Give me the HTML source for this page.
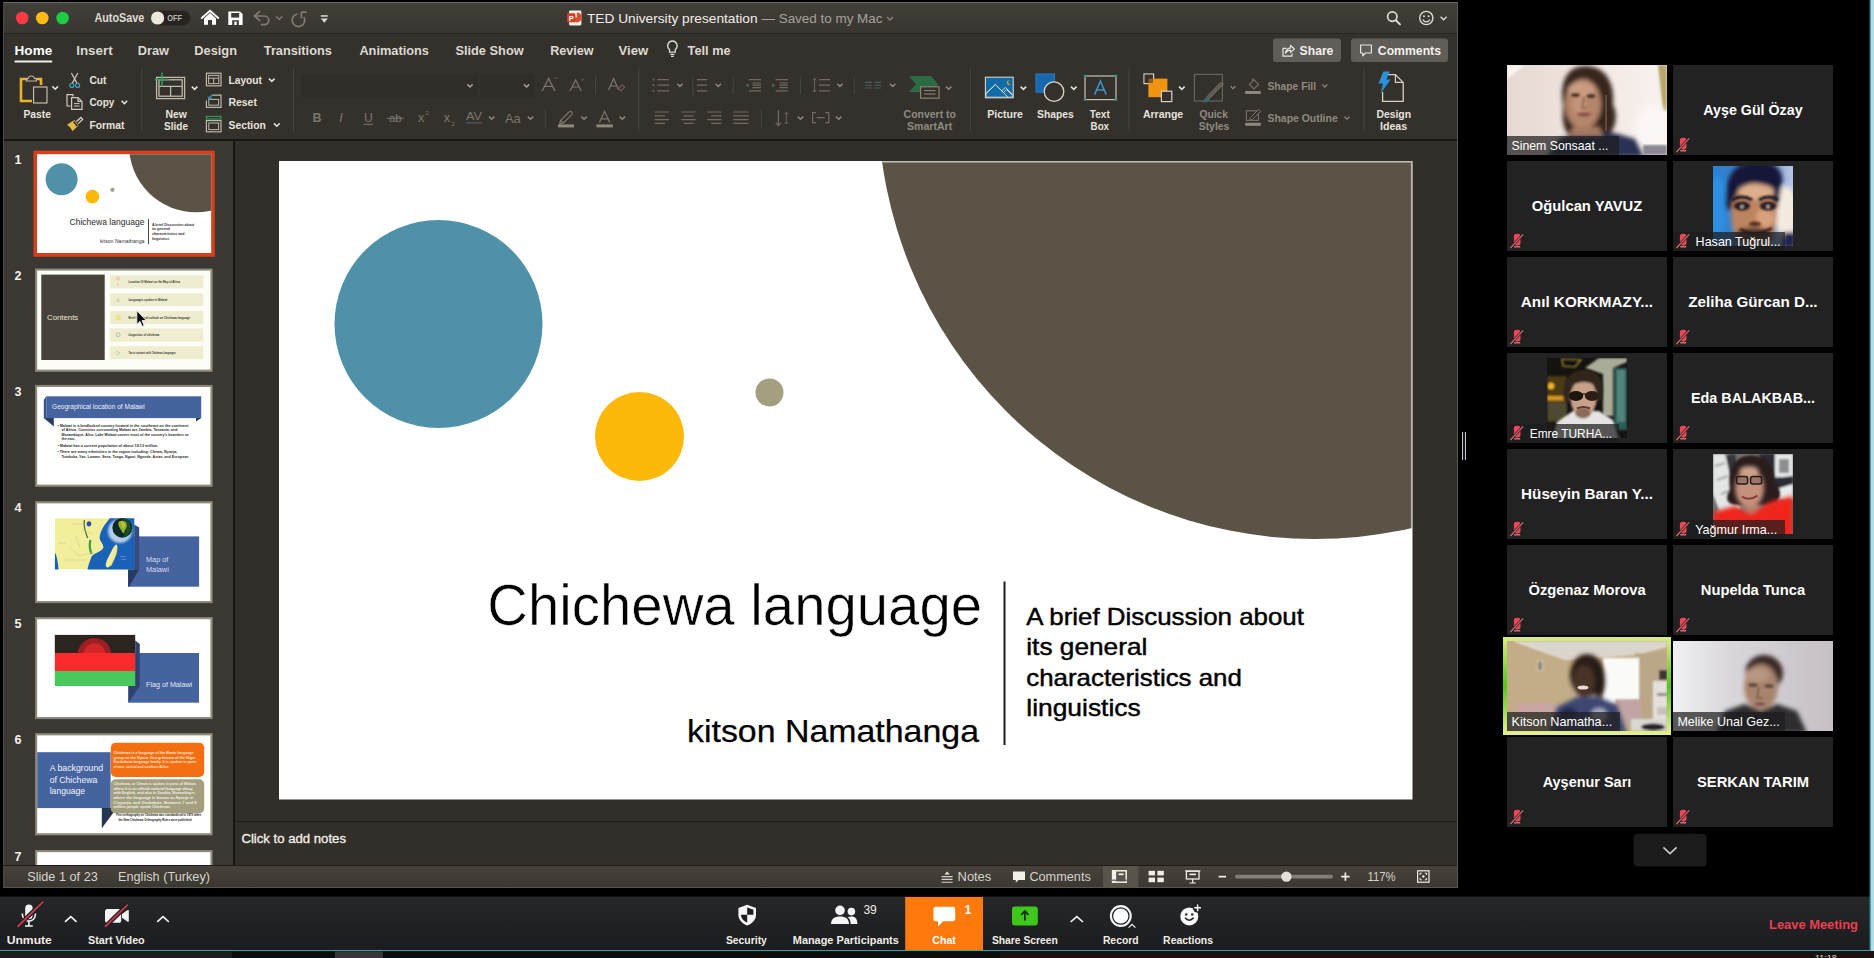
<!DOCTYPE html>
<html lang="en">
<head>
<meta charset="utf-8">
<title>Zoom Meeting - TED University presentation</title>
<style>
html,body{margin:0;padding:0;background:#000;overflow:hidden;}
body{width:1874px;height:958px;position:relative;font-family:"Liberation Sans",sans-serif;}
svg{position:absolute;left:0;top:0;display:block;}
text{font-family:"Liberation Sans",sans-serif;}
.ui{fill:#e9e6df;font-size:12px;}
.uib{fill:#f1eee8;font-size:12px;font-weight:bold;}
.dim{fill:#8d897f;}
.zb{fill:#ffffff;font-size:12.5px;font-weight:bold;}
.pn{fill:#ffffff;font-size:15px;font-weight:bold;}
.ps{fill:#ffffff;font-size:13px;}
</style>
</head>
<body>
<svg width="1874" height="958" viewBox="0 0 1874 958">
<defs>
  <linearGradient id="gTitle" x1="0" y1="0" x2="0" y2="1">
    <stop offset="0" stop-color="#423f3a"/><stop offset="1" stop-color="#393631"/>
  </linearGradient>
  <linearGradient id="gZoom" x1="0" y1="0" x2="0" y2="1"><stop offset="0" stop-color="#262729"/><stop offset="1" stop-color="#1b1c20"/></linearGradient>
  <linearGradient id="gStatus" x1="0" y1="0" x2="0" y2="1">
    <stop offset="0" stop-color="#47433c"/><stop offset="1" stop-color="#3a3731"/>
  </linearGradient>
  <clipPath id="circClip"><circle cx="1315" cy="102" r="437"/></clipPath>
  <clipPath id="slideClip"><rect x="279" y="161" width="1133.5" height="638.5"/></clipPath>
  <filter id="b2"><feGaussianBlur stdDeviation="2"/></filter>
  <filter id="b3"><feGaussianBlur stdDeviation="3.5"/></filter>
  <filter id="b1"><feGaussianBlur stdDeviation="1"/></filter>
  <filter id="b05"><feGaussianBlur stdDeviation="0.5"/></filter>
</defs>

<!-- ============ full background ============ -->
<rect x="0" y="0" width="1874" height="958" fill="#000000"/>

<!-- ============ POWERPOINT WINDOW ============ -->
<g id="ppt">
  <!-- title bar -->
  <rect x="3" y="2" width="1455" height="32" fill="url(#gTitle)"/>
  <rect x="3" y="2" width="1455" height="1" fill="#6b6761"/>
  <!-- tabs + ribbon -->
  <rect x="3" y="34" width="1455" height="105" fill="#34312c"/>
  <rect x="3" y="33" width="1455" height="1" fill="#2a2723"/>
  <rect x="3" y="139" width="1455" height="2" fill="#1a1713"/>
  <!-- thumbnail panel -->
  <rect x="3" y="141" width="230" height="724" fill="#3b3733"/>
  <rect x="233" y="141" width="2" height="724" fill="#191612"/>
  <!-- main editing area -->
  <rect x="235" y="141" width="1223" height="681" fill="#322f2a"/>
  <!-- notes -->
  <rect x="235" y="821" width="1223" height="1" fill="#1f1c18"/>
  <rect x="235" y="822" width="1223" height="43" fill="#322f2a"/>
  <!-- status bar -->
  <rect x="3" y="865" width="1455" height="1" fill="#1f1c18"/>
  <rect x="3" y="866" width="1455" height="22" fill="url(#gStatus)"/>
  <rect x="1457" y="2" width="1" height="886" fill="#5a584e"/>
  <rect x="3" y="887" width="1455" height="1" fill="#5a564d"/>
  <rect x="3" y="2" width="1" height="886" fill="#4c4943"/>
</g>

<!-- ============ MAIN SLIDE ============ -->
<g id="slide">
  <rect x="279" y="161" width="1133.5" height="638.5" fill="#ffffff"/>
  <g clip-path="url(#slideClip)">
    <circle cx="1315" cy="102" r="437" fill="#5b5346"/>
  </g>
  <circle cx="438.5" cy="324" r="104" fill="#4f91a9"/>
  <circle cx="639.5" cy="436.5" r="44.5" fill="#fdb909"/>
  <circle cx="769.5" cy="392.5" r="14" fill="#a39f7f"/>
  <rect x="279.8" y="161.8" width="1131.9" height="636.9" fill="none" stroke="#bdb9ae" stroke-width="1.6" clip-path="url(#circClip)"/>
  <rect x="1003.5" y="581.5" width="2" height="163.5" fill="#1a1a1a"/>
  <text x="487.3" y="624.5" font-size="58" fill="#000" stroke="#ffffff" stroke-width="0.55" textLength="494.8" lengthAdjust="spacingAndGlyphs">Chichewa language</text>
  <text x="687" y="741.7" font-size="30.5" fill="#000" stroke="#000" stroke-width="0.25" textLength="292" lengthAdjust="spacingAndGlyphs">kitson Namathanga</text>
  <g font-size="24" fill="#000" stroke="#000" stroke-width="0.45">
    <text x="1026.3" y="625" textLength="277.6" lengthAdjust="spacingAndGlyphs">A brief Discussion about</text>
    <text x="1026.3" y="655.3" textLength="121" lengthAdjust="spacingAndGlyphs">its general</text>
    <text x="1026.3" y="685.7" textLength="215.5" lengthAdjust="spacingAndGlyphs">characteristics and</text>
    <text x="1026.3" y="716.3" textLength="114.4" lengthAdjust="spacingAndGlyphs">linguistics</text>
  </g>
</g>

<!-- ============ ZOOM TOOLBAR ============ -->
<g id="zoombar-bg">
  <rect x="0" y="896.6" width="1874" height="53.8" fill="url(#gZoom)"/>
  <rect x="0" y="950" width="1874" height="1.3" fill="#3ba3a8"/>
  <rect x="0" y="951.3" width="1874" height="6.7" fill="#0b0c0b"/>
  <rect x="0" y="951.3" width="232" height="6.7" fill="#1d1f1e"/>
  <rect x="335" y="951.3" width="48" height="6.7" fill="#363737"/>
  <rect x="1000" y="951.3" width="874" height="6.7" fill="#1a1210"/>
</g>

<!-- ============ TITLE BAR ============ -->
<g id="titlebar">
  <circle cx="22.2" cy="18" r="6.3" fill="#fc3a45"/>
  <circle cx="42.3" cy="18" r="6.3" fill="#fdbb13"/>
  <circle cx="62.6" cy="18" r="6.3" fill="#1ecb43"/>
  <text x="94.4" y="22.3" font-size="12.3" font-weight="bold" fill="#dedbd3" textLength="50" lengthAdjust="spacingAndGlyphs">AutoSave</text>
  <rect x="151" y="10.8" width="39.5" height="14.4" rx="7.2" fill="#262320"/>
  <circle cx="157.6" cy="18" r="6.6" fill="#ebe7da"/>
  <text x="167.2" y="21.3" font-size="8.8" font-weight="bold" fill="#b9b5ab" textLength="15" lengthAdjust="spacingAndGlyphs">OFF</text>
  <!-- home -->
  <path d="M204 18.4 L210 13 L216 18.4 V24.8 H212 V20 H208 V24.8 H204 Z" fill="#ffffff"/>
  <path d="M201.8 18 L210 10.7 L218.2 18" fill="none" stroke="#ffffff" stroke-width="1.9" stroke-linejoin="miter" stroke-linecap="round"/>
  <!-- save -->
  <path d="M228.3 11.4 H240 L242.6 14 V25 H228.3 Z" fill="#ffffff"/>
  <rect x="231.2" y="13" width="8" height="4.6" fill="#3d3a35"/>
  <rect x="232.2" y="20.2" width="6.6" height="4.8" fill="#3d3a35"/>
  <rect x="234.3" y="21.6" width="2.4" height="3.4" fill="#ffffff"/>
  <!-- undo (dim) -->
  <g fill="none" stroke="#7f7b73" stroke-width="1.7" stroke-linecap="round" stroke-linejoin="round">
    <path d="M259.5 11.6 L254.6 16 L259.5 20.4"/>
    <path d="M255 16 H264.5 A4.3 4.3 0 0 1 264.5 24.6 H261.5"/>
    <path d="M276.4 16.8 L279.2 19.6 L282 16.8" stroke-width="1.4"/>
    <!-- redo -->
    <path d="M304.2 17.6 A6.3 6.3 0 1 1 296.6 14.2"/>
    <path d="M301.4 17.8 V12.2 H306"/>
  </g>
  <!-- customize -->
  <rect x="320.8" y="15.2" width="7" height="1.5" fill="#dedbd3"/>
  <path d="M320.8 18.4 H327.8 L324.3 22.8 Z" fill="#dedbd3"/>
  <!-- ppt doc icon -->
  <rect x="569" y="10.4" width="12.4" height="15" rx="1.4" fill="#f3efe9"/>
  <path d="M576.8 12.4 A5 5 0 1 1 571.8 17.4 H576.8 Z" fill="#d9502e"/>
  <rect x="567" y="13.2" width="8.4" height="9" rx="0.8" fill="#d2401f"/>
  <text x="568.7" y="20.6" font-size="7.6" font-weight="bold" fill="#ffffff">P</text>
  <text x="587" y="22.6" font-size="13" fill="#f1eee8" textLength="170.5" lengthAdjust="spacingAndGlyphs">TED University presentation</text>
  <text x="761.5" y="22.6" font-size="13" fill="#a5a199" textLength="121" lengthAdjust="spacingAndGlyphs">— Saved to my Mac</text>
  <path d="M887 17 L890 20 L893 17" fill="none" stroke="#8a867d" stroke-width="1.3"/>
  <!-- search -->
  <circle cx="1392.3" cy="16.6" r="4.7" fill="none" stroke="#dedbd3" stroke-width="1.7"/>
  <path d="M1395.8 20.2 L1400 24.4" stroke="#dedbd3" stroke-width="2" stroke-linecap="round"/>
  <!-- smiley -->
  <circle cx="1426.3" cy="18" r="6.6" fill="none" stroke="#dedbd3" stroke-width="1.4"/>
  <circle cx="1424" cy="16.2" r="1" fill="#dedbd3"/><circle cx="1428.6" cy="16.2" r="1" fill="#dedbd3"/>
  <path d="M1422.8 19.6 A3.8 3.8 0 0 0 1429.8 19.6" fill="none" stroke="#dedbd3" stroke-width="1.3"/>
  <path d="M1440.6 16.8 L1443.6 19.8 L1446.6 16.8" fill="none" stroke="#dedbd3" stroke-width="1.5"/>
</g>

<!-- ============ TABS ============ -->
<g id="tabs" font-size="13.5" font-weight="bold" fill="#dcd9d1">
  <text x="14.6" y="54.6" fill="#ffffff" textLength="37.6" lengthAdjust="spacingAndGlyphs">Home</text>
  <rect x="14.4" y="60.4" width="38" height="2.2" rx="1" fill="#f2efe9"/>
  <text x="76.2" y="54.6" textLength="36.4" lengthAdjust="spacingAndGlyphs">Insert</text>
  <text x="137.8" y="54.6" textLength="31.2" lengthAdjust="spacingAndGlyphs">Draw</text>
  <text x="194.3" y="54.6" textLength="42.7" lengthAdjust="spacingAndGlyphs">Design</text>
  <text x="263.8" y="54.6" textLength="68" lengthAdjust="spacingAndGlyphs">Transitions</text>
  <text x="359.4" y="54.6" textLength="69.5" lengthAdjust="spacingAndGlyphs">Animations</text>
  <text x="455.4" y="54.6" textLength="68.3" lengthAdjust="spacingAndGlyphs">Slide Show</text>
  <text x="550.2" y="54.6" textLength="43.4" lengthAdjust="spacingAndGlyphs">Review</text>
  <text x="618.5" y="54.6" textLength="29.6" lengthAdjust="spacingAndGlyphs">View</text>
  <!-- bulb -->
  <path d="M672.4 41 A4.7 4.7 0 0 1 675.3 49.4 V52.2 H669.5 V49.4 A4.7 4.7 0 0 1 672.4 41 Z" fill="none" stroke="#dcd9d1" stroke-width="1.3"/>
  <path d="M670.3 54.4 H674.5 M671 56.4 H673.8" stroke="#dcd9d1" stroke-width="1.1"/>
  <text x="687.6" y="54.6" textLength="43" lengthAdjust="spacingAndGlyphs">Tell me</text>
  <!-- share / comments buttons -->
  <rect x="1273" y="38.6" width="68" height="23.4" rx="3" fill="#615e59"/>
  <rect x="1351" y="38.6" width="97" height="23.4" rx="3" fill="#615e59"/>
  <g fill="none" stroke="#e8e5de" stroke-width="1.2" stroke-linejoin="round">
    <path d="M1286.5 48.4 H1283 V56.2 H1292 V53.6"/>
    <path d="M1285.4 53.2 C1286 49.6 1288 48 1290.6 47.8 V45.4 L1294.4 49 L1290.6 52.4 V50.2 C1288.6 50.2 1286.8 51 1285.4 53.2 Z"/>
    <path d="M1360.6 45 H1371.4 V53 H1365.6 L1362.8 55.8 V53 H1360.6 Z"/>
  </g>
  <text x="1299.6" y="54.6" font-size="13" fill="#f4f1ec" textLength="33.8" lengthAdjust="spacingAndGlyphs">Share</text>
  <text x="1377.8" y="54.6" font-size="13" fill="#f4f1ec" textLength="63.2" lengthAdjust="spacingAndGlyphs">Comments</text>
</g>
<!-- ============ RIBBON: clipboard + slides ============ -->
<g id="ribbon-left" font-size="10.5" font-weight="bold" fill="#e6e3dc">
  <!-- paste icon -->
  <path d="M27.5 79 H21 V101 H32" fill="none" stroke="#e9b22c" stroke-width="2.6" stroke-linejoin="miter"/>
  <path d="M36.5 79 H41 V85" fill="none" stroke="#e9b22c" stroke-width="2.6"/>
  <path d="M26.4 81 V78.6 H28 A3.4 3.4 0 0 1 34.6 78.6 H36.4 V81 Z" fill="none" stroke="#bdb6a6" stroke-width="1.1"/>
  <rect x="33.6" y="87" width="13.4" height="16" fill="#34312c" stroke="#cfc6b2" stroke-width="1.1"/>
  <path d="M52.4 86.4 L55.2 89.2 L58 86.4" fill="none" stroke="#e6e3dc" stroke-width="1.5"/>
  <text x="23.4" y="118.2" textLength="27.6" lengthAdjust="spacingAndGlyphs">Paste</text>
  <!-- cut -->
  <g fill="none" stroke="#cfcbc0" stroke-width="1.2">
    <path d="M71.4 73 L77 83.4 M77.8 73 L72.2 83.4"/>
    <circle cx="71.8" cy="85.4" r="2" stroke="#3f9fc0"/><circle cx="77.6" cy="85.4" r="2" stroke="#3f9fc0"/>
  </g>
  <text x="89.4" y="83.9" textLength="17" lengthAdjust="spacingAndGlyphs">Cut</text>
  <!-- copy -->
  <g fill="none" stroke="#cfcbc0" stroke-width="1.2">
    <path d="M73 96.6 V94.6 H67 V106 H70.6"/>
    <path d="M71.6 97.6 H78 L82 101.4 V109.4 H71.6 Z"/>
    <path d="M78 97.8 V101.4 H81.8"/>
    <path d="M74 103.6 H79.6 M74 106 H79.6" stroke-width="1"/>
  </g>
  <text x="89.4" y="106.4" textLength="25" lengthAdjust="spacingAndGlyphs">Copy</text>
  <path d="M121.6 100.8 L124.4 103.6 L127.2 100.8" fill="none" stroke="#e6e3dc" stroke-width="1.5"/>
  <!-- format painter -->
  <path d="M67 124.8 L74.4 120 L78.6 125.6 L72.6 131 C71 128.6 69.4 126.4 67 124.8 Z" fill="#e3bb3f"/>
  <path d="M73.6 121.6 L77.4 126.2" stroke="#3a2c38" stroke-width="1.6"/>
  <path d="M76.4 121.6 L81 117.4 L82.6 119.4 L78.2 123.6" fill="none" stroke="#d8d4c8" stroke-width="1.3"/>
  <text x="89.4" y="128.7" textLength="35" lengthAdjust="spacingAndGlyphs">Format</text>
  <!-- separator -->
  <rect x="141.2" y="68.5" width="1" height="62.5" fill="#4a4741"/>
  <!-- new slide -->
  <g fill="none" stroke="#bdb9ab" stroke-width="1.3">
    <rect x="156.6" y="77.4" width="28" height="21.2"/>
    <rect x="159" y="79.8" width="23.2" height="16.4"/>
    <path d="M159 86.4 H182.2 M170.6 86.4 V96.2"/>
  </g>
  <path d="M162 72.4 V86.4 M154.8 79.4 H169" stroke="#2fa160" stroke-width="1.5"/>
  <path d="M191.8 86.6 L194.6 89.4 L197.4 86.6" fill="none" stroke="#e6e3dc" stroke-width="1.5"/>
  <text x="165.4" y="118.2" textLength="21.4" lengthAdjust="spacingAndGlyphs">New</text>
  <text x="164" y="130.4" textLength="24" lengthAdjust="spacingAndGlyphs">Slide</text>
  <!-- layout -->
  <g fill="none" stroke="#bdb9ab" stroke-width="1.2">
    <rect x="206.4" y="73.2" width="14.6" height="12.6"/>
    <rect x="208.6" y="75.4" width="10.2" height="8.2" stroke-width="1"/>
    <path d="M208.6 78.2 H218.8 M213.7 78.2 V83.6" stroke-width="1"/>
  </g>
  <text x="228.5" y="83.9" textLength="33.5" lengthAdjust="spacingAndGlyphs">Layout</text>
  <path d="M269 78.6 L271.8 81.4 L274.6 78.6" fill="none" stroke="#e6e3dc" stroke-width="1.5"/>
  <!-- reset -->
  <g fill="none" stroke="#bdb9ab" stroke-width="1.2">
    <path d="M212 95.2 H221 V107.4 H206.4 V100.6"/>
    <rect x="208.8" y="99.4" width="9.8" height="5.8" stroke-width="1"/>
  </g>
  <path d="M209.4 99 A4 4 0 0 1 213 95.4 M208 96.6 L209.2 99.4 L211.8 98.2" fill="none" stroke="#3f9fc0" stroke-width="1.1"/>
  <text x="228.5" y="106.4" textLength="28.4" lengthAdjust="spacingAndGlyphs">Reset</text>
  <!-- section -->
  <rect x="206.4" y="116.4" width="14.6" height="2.6" fill="none" stroke="#2fa160" stroke-width="1.1"/>
  <g fill="none" stroke="#bdb9ab" stroke-width="1.2">
    <rect x="206.4" y="120.6" width="14.6" height="11.2"/>
    <rect x="208.8" y="123" width="9.8" height="6.6" stroke-width="1"/>
  </g>
  <text x="228.5" y="128.7" textLength="37.4" lengthAdjust="spacingAndGlyphs">Section</text>
  <path d="M274 123.4 L276.8 126.2 L279.6 123.4" fill="none" stroke="#e6e3dc" stroke-width="1.5"/>
  <rect x="293" y="68.5" width="1" height="62.5" fill="#4a4741"/>
</g>
<!-- ============ RIBBON: font + paragraph (disabled look) ============ -->
<g id="ribbon-mid" fill="none" stroke="#7b776d" stroke-width="1.2" font-weight="normal">
  <!-- font name / size boxes -->
  <rect x="301.5" y="74.4" width="176" height="23" rx="3" fill="#302d28" stroke="none"/>
  <rect x="480.5" y="74.4" width="54" height="23" rx="3" fill="#302d28" stroke="none"/>
  <path d="M467.4 84.4 L470 87 L472.6 84.4 M524 84.4 L526.6 87 L529.2 84.4" stroke="#a5a197" stroke-width="1.5"/>
  <!-- grow / shrink font -->
  <path d="M542.2 91 L548.6 78.4 L555 91 M544.8 86.4 H552.4" stroke-width="1.3"/>
  <path d="M555 78.6 L556.4 77.2 L557.8 78.6" stroke-width="0.8"/>
  <path d="M570 91 L575.6 80 L581.2 91 M572.2 87 H579" stroke-width="1.2"/>
  <path d="M581.4 79 L582.8 80.4 L584.2 79" stroke-width="0.8"/>
  <path d="M595.6 75.6 V94.6" stroke="#4a4741" stroke-width="1"/>
  <!-- clear formatting -->
  <path d="M608.6 90 L613.6 78.6 L618.6 90 M610.6 86 H616.6" stroke-width="1.2"/>
  <path d="M618.6 88.4 L622.2 84.8 L624.6 87.2 L621 90.8 Z" stroke="#7a5560" stroke-width="1.1"/>
  <path d="M638.6 68.5 V131" stroke="#4a4741" stroke-width="1"/>
  <!-- row 2 : B I U ab x2 x2 AV Aa -->
  <g stroke="none" fill="#7b776d" font-size="13">
    <text x="312.4" y="122.4" font-weight="bold" font-size="12.4">B</text>
    <text x="339.2" y="122.4" font-style="italic" font-size="12.6">I</text>
    <text x="364" y="122" font-size="12.2">U</text>
    <rect x="363.6" y="123.8" width="9.4" height="1" />
    <text x="389" y="122" font-size="11.4">ab</text>
    <rect x="386.6" y="117.8" width="17" height="1"/>
    <text x="418" y="122.4" font-size="12.6">x</text>
    <text x="425.6" y="115" font-size="6">2</text>
    <text x="443.8" y="122.4" font-size="12.6">x</text>
    <text x="451.4" y="125.6" font-size="6">2</text>
    <text x="466" y="120" font-size="11.4" textLength="16" lengthAdjust="spacingAndGlyphs">AV</text>
    <rect x="466" y="122.4" width="16" height="1" fill="#4d6a70"/>
    <text x="505" y="122.6" font-size="12.2" textLength="15.6" lengthAdjust="spacingAndGlyphs">Aa</text>
  </g>
  <path d="M489 116.6 L491.7 119.3 L494.4 116.6 M527.8 116.6 L530.5 119.3 L533.2 116.6" stroke="#8b877d" stroke-width="1.5"/>
  <path d="M545.2 109.6 V127.6" stroke="#4a4741" stroke-width="1"/>
  <!-- highlight pen -->
  <path d="M560.6 120.4 L569 112 A1.6 1.6 0 0 1 571.8 114.6 L563.4 123 Z M560.6 120.4 L559.6 124 L563.4 123"/>
  <rect x="558" y="124.4" width="16" height="3" fill="#8d897d" stroke="none"/>
  <path d="M581.4 116.6 L584.1 119.3 L586.8 116.6" stroke="#8b877d" stroke-width="1.5"/>
  <!-- font colour -->
  <path d="M599.4 122.6 L604.6 111.4 L609.8 122.6 M601.4 118.8 H607.8"/>
  <rect x="596.4" y="124.4" width="16.4" height="3" fill="#8d897d" stroke="none"/>
  <path d="M619.6 116.6 L622.3 119.3 L625 116.6" stroke="#8b877d" stroke-width="1.5"/>

  <!-- paragraph row 1 -->
  <g stroke="#6f6b62" stroke-width="1.2">
    <path d="M657.4 79.6 H669 M657.4 85.2 H669 M657.4 90.8 H669"/>
    <path d="M697 79.6 H707.2 M697 85.2 H707.2 M697 90.8 H707.2"/>
    <path d="M749 79.6 H761 M752.4 85.2 H761 M749 90.8 H761 M752.4 83 H761 M752.4 87.6 H761" />
    <path d="M775.6 79.6 H787.8 M779.6 85.2 H787.8 M775.6 90.8 H787.8 M779.6 83 H787.8 M779.6 87.6 H787.8"/>
    <path d="M819 79.6 H830 M819 85.2 H830 M819 90.8 H830"/>
    <path d="M814.6 78.4 V92 M813 80.4 L814.6 78.4 L816.2 80.4 M813 90 L814.6 92 L816.2 90" stroke-width="0.9"/>
  </g>
  <g fill="#4e6a62" stroke="none">
    <circle cx="653.4" cy="79.6" r="1.1"/><circle cx="653.4" cy="85.2" r="1.1"/><circle cx="653.4" cy="90.8" r="1.1"/>
    <path d="M745.6 85.2 L748.6 83.2 V87.2 Z M772.2 83.2 L775.2 85.2 L772.2 87.2 Z"/>
  </g>
  <path d="M865 82.4 H872 M865 85.2 H872 M865 88 H872 M874.4 82.4 H881 M874.4 85.2 H881 M874.4 88 H881" stroke="#4a5f5a" stroke-width="1.1"/>
  <path d="M677.2 83.8 L679.9 86.5 L682.6 83.8 M715.6 83.8 L718.3 86.5 L721 83.8 M837.2 83.8 L839.9 86.5 L842.6 83.8 M890 83.8 L892.7 86.5 L895.4 83.8 M946 86.6 L948.7 89.3 L951.4 86.6" stroke="#8b877d" stroke-width="1.5"/>
  <path d="M692.8 77 V95 M733.2 77 V94 M800.4 77 V94 M854.2 77 V94" stroke="#4a4741" stroke-width="1"/>
  <!-- smartart -->
  <path d="M910 76.8 H931 L937.6 84.4 L931 91.6 H910 L916.6 84.4 Z" fill="#2b6b43" stroke="#2f7449" stroke-width="1"/>
  <rect x="920.6" y="86.8" width="18.4" height="11.4" fill="#34312c" stroke="#8f8a72" stroke-width="1.1"/>
  <path d="M924 90.6 H935.6 M924 94 H935.6" stroke="#8f8a72" stroke-width="1"/>
  <g stroke="none" fill="#8f8b81" font-weight="bold" font-size="10.5">
    <text x="903.6" y="118.2" textLength="52.4" lengthAdjust="spacingAndGlyphs">Convert to</text>
    <text x="907" y="130.4" textLength="45.2" lengthAdjust="spacingAndGlyphs">SmartArt</text>
  </g>
  <path d="M970.4 68.5 V131" stroke="#4a4741" stroke-width="1"/>
  <!-- paragraph row 2 -->
  <g stroke="#6f6b62" stroke-width="1.2">
    <path d="M654.6 112 H669 M654.6 115.8 H665 M654.6 119.6 H669 M654.6 123.4 H665"/>
    <path d="M681.4 112 H695.8 M683.6 115.8 H693.6 M681.4 119.6 H695.8 M683.6 123.4 H693.6"/>
    <path d="M707.2 112 H721.6 M711.2 115.8 H721.6 M707.2 119.6 H721.6 M711.2 123.4 H721.6"/>
    <path d="M733.4 112 H748.6 M733.4 115.8 H748.6 M733.4 119.6 H748.6 M733.4 123.4 H748.6"/>
    <path d="M778.4 110 V125.6 M775.8 123 L778.4 125.6 L781 123"/>
    <path d="M786.4 112.4 V124 M784.8 114.2 L786.4 112.4 L788 114.2 M784.8 122.2 L786.4 124 L788 122.2" stroke-width="0.9"/>
    <path d="M816 112.6 H812.6 V122.6 H816 M825.4 112.6 H828.8 V122.6 H825.4 M816.6 117.6 H824.8"/>
  </g>
  <path d="M761.4 109.6 V127.6" stroke="#4a4741" stroke-width="1"/>
  <path d="M797.8 116.6 L800.5 119.3 L803.2 116.6 M836 116.6 L838.7 119.3 L841.4 116.6" stroke="#8b877d" stroke-width="1.5"/>
</g>
<!-- ============ RIBBON: insert / drawing / designer ============ -->
<g id="ribbon-right" font-size="10.5" font-weight="bold" fill="#e6e3dc">
  <!-- picture -->
  <rect x="985.4" y="77.2" width="27.8" height="20.6" fill="#0f6cab" stroke="#d8d4c4" stroke-width="1.1"/>
  <path d="M986 93.4 L995.4 84.4 L1003.6 92.6 L1006.6 89.6 L1012.6 95.4 V97.2 H986 Z" fill="#0f6cab" stroke="#d8d4c4" stroke-width="1"/>
  <path d="M986 93.6 L995.4 84.6 L1008 97.2 M1001.6 91 L1005.4 87.4 L1012.6 94.6" fill="none" stroke="#d8d4c4" stroke-width="1"/>
  <path d="M1009.6 80 A2.6 2.6 0 1 0 1011.4 84.4 A2.2 2.2 0 0 1 1009.6 80 Z" fill="#f0a830"/>
  <path d="M1020.6 86.6 L1023.4 89.4 L1026.2 86.6" fill="none" stroke="#e6e3dc" stroke-width="1.5"/>
  <text x="987.2" y="118.2" textLength="35.8" lengthAdjust="spacingAndGlyphs">Picture</text>
  <!-- shapes -->
  <rect x="1036" y="74" width="18.6" height="18.2" fill="#1668b0" stroke="#2a7dc4" stroke-width="1"/>
  <circle cx="1054" cy="91.6" r="9.8" fill="#34312c" stroke="#d8d4c4" stroke-width="1.3"/>
  <path d="M1071 86.6 L1073.8 89.4 L1076.6 86.6" fill="none" stroke="#e6e3dc" stroke-width="1.5"/>
  <text x="1037" y="118.2" textLength="36.8" lengthAdjust="spacingAndGlyphs">Shapes</text>
  <!-- text box -->
  <rect x="1085" y="76" width="31" height="23.6" fill="none" stroke="#c8c4b4" stroke-width="1.2"/>
  <g fill="#2e8ba4"><rect x="1083.8" y="74.8" width="2.4" height="2.4"/><rect x="1114.8" y="74.8" width="2.4" height="2.4"/><rect x="1083.8" y="98.4" width="2.4" height="2.4"/><rect x="1114.8" y="98.4" width="2.4" height="2.4"/></g>
  <path d="M1094.6 94.6 L1100.4 81 L1106.2 94.6 M1096.8 90 H1104" fill="none" stroke="#3e95c8" stroke-width="1.5"/>
  <text x="1089.8" y="118.2" textLength="20" lengthAdjust="spacingAndGlyphs">Text</text>
  <text x="1090.6" y="130.4" textLength="18.4" lengthAdjust="spacingAndGlyphs">Box</text>
  <rect x="1128.4" y="68.5" width="1" height="62.5" fill="#4a4741"/>
  <!-- arrange -->
  <rect x="1144" y="74" width="9.6" height="9.6" fill="#34312c" stroke="#d8d4c4" stroke-width="1.2"/>
  <rect x="1148.4" y="78.6" width="19" height="18.6" fill="#f0930f"/>
  <rect x="1144.6" y="74.6" width="8.4" height="8.4" fill="#34312c" opacity="0.55"/>
  <rect x="1161.4" y="91.2" width="10.4" height="10.4" fill="#34312c" stroke="#d8d4c4" stroke-width="1.2"/>
  <path d="M1179 86.6 L1181.8 89.4 L1184.6 86.6" fill="none" stroke="#e6e3dc" stroke-width="1.5"/>
  <text x="1142.9" y="118.2" textLength="40.3" lengthAdjust="spacingAndGlyphs">Arrange</text>
  <!-- quick styles (dim) -->
  <rect x="1194.4" y="74.4" width="28" height="26.6" fill="none" stroke="#66635a" stroke-width="1.2"/>
  <path d="M1223.6 84 L1209.6 98.4 L1207 96.6 L1220.6 82.4 Z" fill="#5d5a52" stroke="#77736a" stroke-width="0.8"/>
  <path d="M1208.6 97.4 C1206 97 1203.6 99 1202.6 102.4 C1206 103 1209.6 101.6 1210 98.8 Z" fill="#3d6473"/>
  <path d="M1230.6 86.2 L1233 88.6 L1235.4 86.2" fill="none" stroke="#8b877d" stroke-width="1.3"/>
  <g fill="#8f8b81">
    <text x="1199.5" y="118.2" textLength="28.5" lengthAdjust="spacingAndGlyphs">Quick</text>
    <text x="1198.7" y="130.4" textLength="30.7" lengthAdjust="spacingAndGlyphs">Styles</text>
    <text x="1267.5" y="90.2" textLength="48.5" lengthAdjust="spacingAndGlyphs">Shape Fill</text>
    <text x="1267.5" y="122.4" textLength="70.2" lengthAdjust="spacingAndGlyphs">Shape Outline</text>
  </g>
  <!-- shape fill icon -->
  <path d="M1249.4 84.4 L1254 79.8 L1258.6 84.4 L1254 89 Z M1252.6 81.2 V78.4" fill="none" stroke="#77736a" stroke-width="1.1"/>
  <rect x="1245.2" y="91" width="15.6" height="3" fill="#8d897d"/>
  <path d="M1322.2 84.4 L1324.8 87 L1327.4 84.4" fill="none" stroke="#8b877d" stroke-width="1.3"/>
  <!-- shape outline icon -->
  <rect x="1246.4" y="110.8" width="12" height="9.6" fill="none" stroke="#77736a" stroke-width="1.1"/>
  <path d="M1250.4 117.6 L1258.6 109.4 L1260.6 111.4 L1252.4 119.6 L1249.8 120.2 Z" fill="#34312c" stroke="#77736a" stroke-width="1"/>
  <rect x="1245.2" y="122.8" width="15.6" height="3" fill="#8d897d"/>
  <path d="M1344.4 116.6 L1347 119.2 L1349.6 116.6" fill="none" stroke="#8b877d" stroke-width="1.3"/>
  <rect x="1363.4" y="68.5" width="1" height="62.5" fill="#4a4741"/>
  <!-- design ideas -->
  <path d="M1382.6 74.6 H1395.4 L1403.2 82.4 V101.4 H1382.6 V92" fill="none" stroke="#d8d4c4" stroke-width="1.3"/>
  <path d="M1395.4 74.8 V82.4 H1403" fill="none" stroke="#d8d4c4" stroke-width="1.2"/>
  <path d="M1383.4 71.6 H1389.8 L1386.4 79.4 H1390.6 L1380.6 93.4 L1383 83.6 H1378.4 Z" fill="#2a93d8"/>
  <text x="1376.4" y="118.2" textLength="34.6" lengthAdjust="spacingAndGlyphs">Design</text>
  <text x="1380" y="130.4" textLength="27.2" lengthAdjust="spacingAndGlyphs">Ideas</text>
</g>
<!-- ============ THUMBNAIL PANEL ============ -->
<g id="thumbs">
  <g font-size="12.6" font-weight="bold" fill="#f4f1ea">
    <text x="14.6" y="163.8">1</text><text x="14.6" y="279.8">2</text><text x="14.6" y="395.6">3</text>
    <text x="14.6" y="511.6">4</text><text x="14.6" y="628">5</text><text x="14.6" y="744">6</text><text x="14.6" y="860.6">7</text>
  </g>
  <!-- thumb 1 (selected) -->
  <rect x="33.4" y="150.6" width="181.4" height="106.2" fill="#d53f19"/>
  <rect x="37" y="154.2" width="174.2" height="98.8" fill="#ffffff"/>
  <clipPath id="t1c"><rect x="37" y="154.2" width="174.2" height="98.8"/></clipPath>
  <g clip-path="url(#t1c)"><circle cx="196.1" cy="145.2" r="67.1" fill="#5b5346"/></g>
  <circle cx="61.6" cy="179.3" r="16" fill="#4f91a9"/>
  <circle cx="92.4" cy="196.6" r="6.8" fill="#fdb909"/>
  <circle cx="112.4" cy="189.8" r="2.1" fill="#a39f7f"/>
  <rect x="148.1" y="218.9" width="0.9" height="25.2" fill="#333"/>
  <text x="69.5" y="225.4" font-size="8.9" fill="#2a2a2a" textLength="74.9" lengthAdjust="spacingAndGlyphs">Chichewa language</text>
  <text x="100" y="243.4" font-size="4.7" fill="#333" textLength="44.4" lengthAdjust="spacingAndGlyphs">kitson Namathanga</text>
  <g font-size="3.6" fill="#333" font-weight="bold">
    <text x="151.9" y="225.5" textLength="42.4" lengthAdjust="spacingAndGlyphs">A brief Discussion about</text>
    <text x="151.9" y="230.2" textLength="18.1" lengthAdjust="spacingAndGlyphs">its general</text>
    <text x="151.9" y="234.8" textLength="32.6" lengthAdjust="spacingAndGlyphs">characteristics and</text>
    <text x="151.9" y="239.5" textLength="17.2" lengthAdjust="spacingAndGlyphs">linguistics</text>
  </g>

  <!-- thumb 2 -->
  <rect x="35.4" y="268.9" width="176.8" height="102.6" fill="#8f8b7e" stroke="#8f8b7e" stroke-width="0.6"/>
  <rect x="37.2" y="270.6" width="173.2" height="99" fill="#fdfdf8"/>
  <rect x="41.3" y="274.6" width="63.4" height="85.4" fill="#46413a"/>
  <text x="47" y="320" font-size="8" fill="#ebe7c4" textLength="31.2" lengthAdjust="spacingAndGlyphs">Contents</text>
  <g fill="#eeedcf">
    <rect x="110.2" y="275.3" width="93.2" height="13"/><rect x="110.2" y="293.3" width="93.2" height="12.8"/>
    <rect x="110.2" y="311.1" width="93.2" height="13"/><rect x="110.2" y="328.4" width="93.2" height="13.3"/>
    <rect x="110.2" y="346.2" width="93.2" height="13"/>
  </g>
  <g fill="none" stroke-width="0.7">
    <path d="M118 280 A1.6 1.6 0 1 1 118.1 280 M118 283.2 V285.6" stroke="#e7a08a"/>
    <path d="M116.6 301.4 L118 298 L119.6 301.4 Z" stroke="#c9c8a4"/>
    <rect x="116.2" y="315.2" width="4" height="4.4" fill="#eee87a" stroke="#e8e27a"/>
    <circle cx="118.2" cy="334.8" r="1.9" stroke="#7fb3b0"/>
    <path d="M116.4 351 L119.8 353 L116.4 355" stroke="#a6c49a"/>
  </g>
  <g font-size="2.9" fill="#3a3a33" font-weight="bold">
    <text x="128.4" y="283" textLength="51.6" lengthAdjust="spacingAndGlyphs">Location Of Malawi on the Map of Africa</text>
    <text x="128.4" y="300.6" textLength="39" lengthAdjust="spacingAndGlyphs">Languages spoken in Malawi</text>
    <text x="128.4" y="318.8" textLength="61.6" lengthAdjust="spacingAndGlyphs">Brief historical outlook on Chichewa language</text>
    <text x="128.4" y="336" textLength="31" lengthAdjust="spacingAndGlyphs">Linguistics of chichewa</text>
    <text x="128.4" y="353.6" textLength="47.4" lengthAdjust="spacingAndGlyphs">Tea to contrast with Chichewa Languages</text>
  </g>

  <!-- thumb 3 -->
  <rect x="35.4" y="385.2" width="176.8" height="101.2" fill="#8f8b7e" stroke="#8f8b7e" stroke-width="0.6"/>
  <rect x="37.2" y="387" width="173.2" height="97.6" fill="#ffffff"/>
  <path d="M43.8 418 H53.8 V426.4 Z" fill="#2a3c63"/>
  <path d="M196 418 H201.2 L196 421.4 Z" fill="#2a3c63"/>
  <rect x="46.3" y="396.3" width="154.9" height="21.8" fill="#44639f"/>
  <path d="M43.8 400 L46.3 396.3 V418 H43.8 Z" fill="#3a568c"/>
  <text x="52.1" y="408.8" font-size="6.5" fill="#eef1f8" textLength="92.7" lengthAdjust="spacingAndGlyphs">Geographical location of Malawi</text>
  <g font-size="3" fill="#2c2c2c" font-weight="bold">
    <text x="57.4" y="426.6" textLength="131" lengthAdjust="spacingAndGlyphs">• Malawi is a landlocked country located in the southeast on the continent</text>
    <text x="61.4" y="431.2" textLength="116" lengthAdjust="spacingAndGlyphs">of Africa. Countries surrounding Malawi are Zambia, Tanzania, and</text>
    <text x="61.4" y="435.8" textLength="127" lengthAdjust="spacingAndGlyphs">Mozambique. Also, Lake Malawi covers most of the country's boarders to</text>
    <text x="61.4" y="440.4" textLength="14" lengthAdjust="spacingAndGlyphs">the east.</text>
    <text x="57.4" y="446.6" textLength="101" lengthAdjust="spacingAndGlyphs">• Malawi has a current population of about 19.13 million.</text>
    <text x="57.4" y="453.4" textLength="120" lengthAdjust="spacingAndGlyphs">• There are many ethnicities in the region including: Chewa, Nyanja,</text>
    <text x="61.4" y="457.8" textLength="127" lengthAdjust="spacingAndGlyphs">Tumbuka, Yao, Lomwe, Sena, Tonga, Ngoni, Ngonde, Asian, and European</text>
  </g>

  <!-- thumb 4 -->
  <rect x="35.4" y="501.6" width="176.8" height="101.2" fill="#8f8b7e" stroke="#8f8b7e" stroke-width="0.6"/>
  <rect x="37.2" y="503.4" width="173.2" height="97.6" fill="#ffffff"/>
  <rect x="128.1" y="536.4" width="71" height="50.3" fill="#44639f"/>
  <path d="M128.1 569.5 H139.2 L129 586.7 H128.1 Z" fill="#2b3a62"/>
  <path d="M134.2 524.6 L139.2 527.6 V569.5 H134.2 Z" fill="#364b7d"/>
  <clipPath id="t4c"><rect x="54.7" y="518.2" width="79.6" height="51.3"/></clipPath>
  <g clip-path="url(#t4c)">
    <rect x="54.7" y="518.2" width="79.6" height="51.3" fill="#f1ee9c"/>
    <path d="M110 518 C106 523 100.6 529 99.6 537.6 C99.4 541 103.8 544 103.4 547.8 C101 552.6 94 552.6 91.6 556.6 C90 561 88.4 565 87.4 570 H135 V518 Z" fill="#1a61b8"/>
    <path d="M54.7 552 C57 556 58 563 58.6 570 H54.7 Z" fill="#1a61b8"/>
    <path d="M116.8 544.6 C118.6 548 116.4 556 112.6 563 C110 567.6 106.4 568.6 105.8 566 C105.6 561 109.6 555 112 550 C113.6 547 115.4 544.4 116.8 544.6 Z" fill="#f1ee9c"/>
    <path d="M111.4 566 C112 560 115 552 116.4 547" fill="none" stroke="#eec96c" stroke-width="0.5"/>
    <path d="M84.4 520 C83 527 86 533 87.6 538" fill="none" stroke="#4e7044" stroke-width="1.3"/>
    <path d="M90.4 540 C89 545 90 550 91.6 554" fill="none" stroke="#3f9c45" stroke-width="2.2"/>
    <ellipse cx="89" cy="523.8" rx="2.3" ry="2.6" fill="#2a4e98"/>
    <path d="M72 524 H84 M58 543 H66 M82 530 L93 534 M70 548 L80 556 L94 552 M64 560 H86 M76 536 L80 548" stroke="#d7cf84" stroke-width="0.6" fill="none"/>
    <circle cx="120" cy="531" r="12" fill="#f4fafa" opacity="0.7" filter="url(#b1)"/>
    <circle cx="122.3" cy="527.8" r="9.9" fill="#0c2a26"/>
    <path d="M122.3 518 A9.9 9.9 0 0 1 122.3 537.6 A14 14 0 0 0 122.3 518 Z" fill="#1f5a24" opacity="0.8"/>
    <path d="M119 521.6 C122 520 126.6 521 126.8 525 C127 528.6 124.6 529.6 124.4 533 C122.6 534.4 121.6 530.6 120.2 528.6 C118.4 526.6 117.6 523.4 119 521.6 Z" fill="#8fb030"/>
    <path d="M121 522 C124 521.6 125.6 523.4 124.6 526 C123.8 528 123 529 122.4 527 Z" fill="#d6c63a" opacity="0.8"/>
    <path d="M120 556.6 H126 M121.4 559.4 H126" stroke="#6fa0d8" stroke-width="0.7"/>
  </g>
  <g font-size="7.2" fill="#d9dfef">
    <text x="146" y="562.4" textLength="22.4" lengthAdjust="spacingAndGlyphs">Map of</text>
    <text x="146" y="571.7" textLength="22.8" lengthAdjust="spacingAndGlyphs">Malawi</text>
  </g>

  <!-- thumb 5 -->
  <rect x="35.4" y="617.4" width="176.8" height="101.4" fill="#8f8b7e" stroke="#8f8b7e" stroke-width="0.6"/>
  <rect x="37.2" y="619.2" width="173.2" height="97.8" fill="#ffffff"/>
  <rect x="128.4" y="653" width="70.6" height="49.7" fill="#44639f"/>
  <path d="M128.4 685.9 H139.8 L128.4 702.7 Z" fill="#2f436e"/>
  <path d="M135.2 640.4 L139.8 644 V686 H135.2 Z" fill="#2f436e"/>
  <rect x="54.8" y="634.9" width="80.4" height="18.3" fill="#2c241f"/>
  <path d="M77.8 653 A16.8 16.8 0 0 1 111.2 653 Z" fill="#9c1f24"/>
  <path d="M83.4 653 A11.2 11.2 0 0 1 105.6 653 Z" fill="#d2262b"/>
  <rect x="54.8" y="653" width="80.4" height="18.2" fill="#fb2a2d"/>
  <rect x="54.8" y="671" width="80.4" height="15" fill="#49c95c"/>
  <text x="146" y="687.3" font-size="7" fill="#e3e7f2" textLength="46.2" lengthAdjust="spacingAndGlyphs">Flag of Malawi</text>

  <!-- thumb 6 -->
  <rect x="35.4" y="733.6" width="176.8" height="101.4" fill="#8f8b7e" stroke="#8f8b7e" stroke-width="0.6"/>
  <rect x="37.2" y="735.4" width="173.2" height="97.8" fill="#ffffff"/>
  <rect x="37.2" y="752.2" width="73.4" height="55.9" fill="#44639f"/>
  <path d="M101.8 808.1 H116.8 L101.8 828.2 Z" fill="#27344f"/>
  <g font-size="8.6" fill="#f3f5fa">
    <text x="49.7" y="771.4" textLength="53.5" lengthAdjust="spacingAndGlyphs">A background</text>
    <text x="49.7" y="782.8" textLength="47.6" lengthAdjust="spacingAndGlyphs">of Chichewa</text>
    <text x="49.7" y="794.2" textLength="35.4" lengthAdjust="spacingAndGlyphs">language</text>
  </g>
  <rect x="110.8" y="742.7" width="93.4" height="34.2" rx="5" fill="#f36f12"/>
  <rect x="110.8" y="779.3" width="93.4" height="34.2" rx="5" fill="#a39f7f"/>
  <g font-size="3" fill="#fbe3cf" font-weight="bold">
    <text x="113.5" y="754.4" textLength="80" lengthAdjust="spacingAndGlyphs">Chichewa is a language of the Bantu language</text>
    <text x="113.5" y="758.6" textLength="82" lengthAdjust="spacingAndGlyphs">group on the Nyasa. Group known of the Niger</text>
    <text x="113.5" y="762.8" textLength="83" lengthAdjust="spacingAndGlyphs">Kordofania language family. It is spoken in parts</text>
    <text x="113.5" y="768" textLength="55" lengthAdjust="spacingAndGlyphs">of east, central and southern Africa</text>
  </g>
  <g font-size="3" fill="#efeee4" font-weight="bold">
    <text x="113.5" y="785" textLength="83" lengthAdjust="spacingAndGlyphs">Chichewa, or Chewa is spoken in parts of Malawi,</text>
    <text x="113.5" y="789.6" textLength="79" lengthAdjust="spacingAndGlyphs">where it is an official national language along</text>
    <text x="113.5" y="794.2" textLength="82" lengthAdjust="spacingAndGlyphs">with English, and also in Zambia, Mozambique,</text>
    <text x="113.5" y="799.4" textLength="80" lengthAdjust="spacingAndGlyphs">where the language is known as Nyanja in</text>
    <text x="113.5" y="804" textLength="83" lengthAdjust="spacingAndGlyphs">Cinyanja, and Zimbabwe. Between 7 and 8</text>
    <text x="113.5" y="808.4" textLength="57" lengthAdjust="spacingAndGlyphs">million people speak Chichewa.</text>
  </g>
  <g font-size="2.7" fill="#222" font-weight="bold">
    <text x="116.2" y="816.2" textLength="85" lengthAdjust="spacingAndGlyphs">First orthography on Chichewa was standardised in 1973 when</text>
    <text x="118.4" y="820.8" textLength="74" lengthAdjust="spacingAndGlyphs">the New Chichewa Orthography Rules were published.</text>
  </g>

  <!-- thumb 7 (clipped) -->
  <rect x="35.1" y="850.1" width="177.4" height="14.9" fill="#8f8b7e"/>
  <rect x="37.2" y="852.2" width="173.2" height="12.8" fill="#ffffff"/>
  <rect x="3" y="865" width="230" height="1" fill="#1f1c18"/>

  <!-- mouse cursor -->
  <path d="M136.8 310.6 V324.4 L140 321.4 L142.2 326.4 L144.2 325.4 L142 320.6 H146.4 Z" fill="#0c0c0c" stroke="#f4f4f4" stroke-width="0.9" stroke-linejoin="round"/>
</g>
<!-- ============ NOTES + STATUS BAR ============ -->
<g id="status">
  <text x="241.4" y="843.2" font-size="12.4" fill="#f2efe9" stroke="#f2efe9" stroke-width="0.3" textLength="104.6" lengthAdjust="spacingAndGlyphs">Click to add notes</text>
  <g font-size="12.6" fill="#d6d3cb">
    <text x="27.2" y="881" textLength="70.6" lengthAdjust="spacingAndGlyphs">Slide 1 of 23</text>
    <text x="118" y="881" textLength="92" lengthAdjust="spacingAndGlyphs">English (Turkey)</text>
    <text x="957.6" y="881" font-size="12.2" textLength="33.6" lengthAdjust="spacingAndGlyphs">Notes</text>
    <text x="1029.4" y="881" font-size="12.2" textLength="61.4" lengthAdjust="spacingAndGlyphs">Comments</text>
    <text x="1367.6" y="881" font-size="12" textLength="28" lengthAdjust="spacingAndGlyphs">117%</text>
  </g>
  <!-- notes icon -->
  <path d="M941.6 876.6 H952.6 M941.6 879.4 H952.6 M941.6 882.2 H952.6" stroke="#d6d3cb" stroke-width="1.1"/>
  <path d="M944.4 874.6 L947.1 871.4 L949.8 874.6 Z" fill="#e8e5dd"/>
  <!-- comments icon -->
  <path d="M1013 871.6 H1025 V880 H1018.6 L1015.8 882.8 V880 H1013 Z" fill="#f2efe9"/>
  <!-- normal view (selected) -->
  <rect x="1103" y="866" width="35.4" height="21" fill="#58544a"/>
  <rect x="1112.6" y="870.8" width="13.6" height="11.4" fill="none" stroke="#f2efe9" stroke-width="1.5"/>
  <rect x="1112" y="870.2" width="4.2" height="12.6" fill="#f2efe9"/>
  <rect x="1118.6" y="873.4" width="5" height="1.8" fill="#f2efe9"/>
  <rect x="1112" y="879.6" width="14.8" height="1.2" fill="#58544a"/>
  <!-- slide sorter -->
  <g fill="#f2efe9"><rect x="1148.6" y="870.8" width="6.4" height="4.6"/><rect x="1157.4" y="870.8" width="6.4" height="4.6"/><rect x="1148.6" y="877.6" width="6.4" height="4.6"/><rect x="1157.4" y="877.6" width="6.4" height="4.6"/></g>
  <!-- slideshow -->
  <rect x="1186.4" y="871.2" width="12.6" height="7.8" fill="none" stroke="#f2efe9" stroke-width="1.3"/>
  <path d="M1185 871 H1200.4 M1192.7 879 V882.6 M1189.6 883 H1195.8" stroke="#f2efe9" stroke-width="1.2"/>
  <rect x="1189.4" y="873.6" width="6.6" height="1.6" fill="#f2efe9"/>
  <!-- zoom slider -->
  <rect x="1218.6" y="875.8" width="7.4" height="1.7" fill="#f2efe9"/>
  <rect x="1235" y="874.8" width="98" height="3.6" rx="1.8" fill="#827e75"/>
  <circle cx="1286.4" cy="876.6" r="5.2" fill="#e3e0d8"/>
  <path d="M1341.2 876.6 H1349.6 M1345.4 872.4 V880.8" stroke="#f2efe9" stroke-width="1.7"/>
  <!-- fit -->
  <rect x="1417.6" y="870.8" width="11.4" height="11.4" fill="none" stroke="#f2efe9" stroke-width="1.2"/>
  <path d="M1420 875 V873.2 H1421.8 M1424.8 873.2 H1426.6 V875 M1426.6 878 V879.8 H1424.8 M1421.8 879.8 H1420 V878" fill="none" stroke="#f2efe9" stroke-width="1"/>
  <rect x="1422.2" y="875.4" width="2.2" height="2.2" fill="#f2efe9"/>
</g>
<!-- ============ ZOOM TOOLBAR CONTENT ============ -->
<g id="zoombar" font-size="10.9" font-weight="bold" fill="#f3eee4">
  <!-- mic muted -->
  <rect x="25.2" y="904.6" width="7.4" height="14.6" rx="3.7" fill="#f4f4f4"/>
  <path d="M22.4 913.4 V914.6 A6.5 6.5 0 0 0 35.4 914.6 V913.4 M28.9 921.2 V925.6 M25 926 H32.8" fill="none" stroke="#f4f4f4" stroke-width="1.6"/>
  <path d="M43.3 901.6 L17.5 926.8" stroke="#1c1d1f" stroke-width="4.4"/>
  <path d="M43.3 901.6 L17.5 926.8" stroke="#c33a4b" stroke-width="2"/>
  <text x="6.7" y="943.7" textLength="45.2" lengthAdjust="spacingAndGlyphs">Unmute</text>
  <path d="M65 921.8 L70.8 916.6 L76.6 921.8" fill="none" stroke="#f4f4f4" stroke-width="1.6"/>
  <!-- video off -->
  <rect x="105" y="909" width="16.2" height="13.8" rx="2.6" fill="#f4f4f4"/>
  <path d="M122 914 L127.6 910 A0.8 0.8 0 0 1 128.8 910.8 V921 A0.8 0.8 0 0 1 127.6 921.8 L122 917.8 Z" fill="#f4f4f4"/>
  <path d="M127.8 904.6 L105 926.8" stroke="#1c1d1f" stroke-width="4.4"/>
  <path d="M127.8 904.6 L105 926.8" stroke="#c33a4b" stroke-width="2"/>
  <text x="88.1" y="943.7" textLength="56.6" lengthAdjust="spacingAndGlyphs">Start Video</text>
  <path d="M157.2 921.8 L163 916.6 L168.8 921.8" fill="none" stroke="#f4f4f4" stroke-width="1.6"/>
  <!-- security -->
  <path d="M747.2 904.8 L756 908 V914.6 C756 920 752.4 923.6 747.2 925.6 C742 923.6 738.4 920 738.4 914.6 V908 Z" fill="#f4f4f4"/>
  <path d="M747.2 907.6 L753.4 909.8 V914.8 H747.2 Z M747.2 914.8 V922.6 C744 921.2 741 918.6 741 914.8 Z" fill="#1c1d1f"/>
  <text x="725.9" y="943.7" textLength="41" lengthAdjust="spacingAndGlyphs">Security</text>
  <!-- participants -->
  <circle cx="840" cy="910.4" r="4.8" fill="#f4f4f4"/>
  <path d="M831 924 C831 918.6 834.6 916.4 840 916.4 C845.4 916.4 849 918.6 849 924 Z" fill="#f4f4f4"/>
  <circle cx="851.4" cy="911.6" r="3.8" fill="#f4f4f4"/>
  <path d="M850.6 924 C850.8 920.6 849.6 918.4 847.6 917.2 C849 916.6 850.4 916.4 851.6 916.4 C855.2 916.4 857.4 918.6 857.4 924 Z" fill="#f4f4f4"/>
  <text x="863.4" y="914.2" font-weight="normal" font-size="12.6" textLength="13.4" lengthAdjust="spacingAndGlyphs">39</text>
  <text x="792.8" y="943.7" textLength="106" lengthAdjust="spacingAndGlyphs">Manage Participants</text>
  <!-- chat (highlighted) -->
  <rect x="905.2" y="897" width="77.8" height="53" fill="#ff7a0d"/>
  <path d="M936 906.8 H952.6 A2.6 2.6 0 0 1 955.2 909.4 V918.6 A2.6 2.6 0 0 1 952.6 921.2 H943.4 L938 926.4 V921.2 H936 A2.6 2.6 0 0 1 933.4 918.6 V909.4 A2.6 2.6 0 0 1 936 906.8 Z" fill="#ffffff"/>
  <text x="964.4" y="914.2" fill="#ffffff" font-size="12.4">1</text>
  <text x="932.3" y="943.7" fill="#ffffff" textLength="23.6" lengthAdjust="spacingAndGlyphs">Chat</text>
  <!-- share screen -->
  <rect x="1012" y="906.6" width="25.8" height="19" rx="3" fill="#3fc71c"/>
  <path d="M1024.9 920.6 V911.4 M1021.2 914.8 L1024.9 911 L1028.6 914.8" fill="none" stroke="#16330c" stroke-width="1.8"/>
  <text x="991.9" y="943.7" textLength="66" lengthAdjust="spacingAndGlyphs">Share Screen</text>
  <path d="M1070.6 922 L1076.8 916.6 L1083 922" fill="none" stroke="#f4f4f4" stroke-width="1.6"/>
  <!-- record -->
  <circle cx="1120.8" cy="916" r="9.9" fill="none" stroke="#f4f4f4" stroke-width="2.1"/>
  <circle cx="1120.8" cy="916" r="7.6" fill="#fbfbfd"/>
  <path d="M1128.6 927.6 L1132 924.4 L1135.4 927.6" fill="none" stroke="#f4f4f4" stroke-width="1.2"/>
  <text x="1102.9" y="943.7" textLength="35.7" lengthAdjust="spacingAndGlyphs">Record</text>
  <!-- reactions -->
  <circle cx="1189.3" cy="916.4" r="9" fill="#f8f8f8"/>
  <circle cx="1186.2" cy="914.4" r="1.2" fill="#1c1d1f"/><circle cx="1192.2" cy="914.4" r="1.2" fill="#1c1d1f"/>
  <path d="M1185 917.8 Q1189.3 922.6 1193.6 917.8" fill="none" stroke="#1c1d1f" stroke-width="1.5"/>
  <circle cx="1197.6" cy="907.8" r="4.8" fill="#212224"/>
  <path d="M1194.2 907.8 H1201 M1197.6 904.4 V911.2" stroke="#f4f4f4" stroke-width="1.5"/>
  <text x="1163.1" y="943.7" textLength="49.9" lengthAdjust="spacingAndGlyphs">Reactions</text>
  <text x="1769" y="928.6" fill="#e93f50" font-size="13" textLength="88.9" lengthAdjust="spacingAndGlyphs">Leave Meeting</text>
  <text x="1815" y="961.4" font-size="9" fill="#d8d8d8" font-weight="normal">11:18</text>
</g>
<!-- ============ PARTICIPANTS PANEL ============ -->
<g id="participants">
<defs>
<clipPath id="tc00"><rect x="1507" y="65" width="160" height="90"/></clipPath>
<clipPath id="tc01"><rect x="1673" y="65" width="160" height="90"/></clipPath>
<clipPath id="tc10"><rect x="1507" y="161" width="160" height="90"/></clipPath>
<clipPath id="tc11"><rect x="1673" y="161" width="160" height="90"/></clipPath>
<clipPath id="tc20"><rect x="1507" y="257" width="160" height="90"/></clipPath>
<clipPath id="tc21"><rect x="1673" y="257" width="160" height="90"/></clipPath>
<clipPath id="tc30"><rect x="1507" y="353" width="160" height="90"/></clipPath>
<clipPath id="tc31"><rect x="1673" y="353" width="160" height="90"/></clipPath>
<clipPath id="tc40"><rect x="1507" y="449" width="160" height="90"/></clipPath>
<clipPath id="tc41"><rect x="1673" y="449" width="160" height="90"/></clipPath>
<clipPath id="tc50"><rect x="1507" y="545" width="160" height="90"/></clipPath>
<clipPath id="tc51"><rect x="1673" y="545" width="160" height="90"/></clipPath>
<clipPath id="tc60"><rect x="1507" y="641" width="160" height="90"/></clipPath>
<clipPath id="tc61"><rect x="1673" y="641" width="160" height="90"/></clipPath>
<clipPath id="tc70"><rect x="1507" y="737" width="160" height="90"/></clipPath>
<clipPath id="tc71"><rect x="1673" y="737" width="160" height="90"/></clipPath>
<clipPath id="av11"><rect x="1713" y="166" width="80" height="80"/></clipPath>
<clipPath id="av30"><rect x="1547" y="358" width="80" height="80"/></clipPath>
<clipPath id="av41"><rect x="1713" y="454" width="80" height="80"/></clipPath>
<linearGradient id="gSpk" x1="0" y1="0" x2="0" y2="1"><stop offset="0" stop-color="#dcec86"/><stop offset="0.5" stop-color="#55c41c"/><stop offset="1" stop-color="#e8f090"/></linearGradient>
<linearGradient id="gSinem" x1="0" y1="0" x2="1" y2="0"><stop offset="0" stop-color="#e6d8d2"/><stop offset="0.6" stop-color="#f3e9e5"/><stop offset="1" stop-color="#f8f2ee"/></linearGradient>
<linearGradient id="gMel" x1="0" y1="0" x2="1" y2="0"><stop offset="0" stop-color="#f1f1f3"/><stop offset="0.35" stop-color="#d9d7dc"/><stop offset="1" stop-color="#c6bfc6"/></linearGradient>
<linearGradient id="gHas" x1="0" y1="0" x2="1" y2="0"><stop offset="0" stop-color="#2a82d2"/><stop offset="0.45" stop-color="#3d7fc4"/><stop offset="1" stop-color="#b9c6e4"/></linearGradient>
</defs>
<rect x="1507" y="65" width="160" height="90" fill="#222222"/>
<rect x="1673" y="65" width="160" height="90" fill="#222222"/>
<rect x="1507" y="161" width="160" height="90" fill="#222222"/>
<rect x="1673" y="161" width="160" height="90" fill="#222222"/>
<rect x="1507" y="257" width="160" height="90" fill="#222222"/>
<rect x="1673" y="257" width="160" height="90" fill="#222222"/>
<rect x="1507" y="353" width="160" height="90" fill="#222222"/>
<rect x="1673" y="353" width="160" height="90" fill="#222222"/>
<rect x="1507" y="449" width="160" height="90" fill="#222222"/>
<rect x="1673" y="449" width="160" height="90" fill="#222222"/>
<rect x="1507" y="545" width="160" height="90" fill="#222222"/>
<rect x="1673" y="545" width="160" height="90" fill="#222222"/>
<rect x="1507" y="641" width="160" height="90" fill="#222222"/>
<rect x="1673" y="641" width="160" height="90" fill="#222222"/>
<rect x="1507" y="737" width="160" height="90" fill="#222222"/>
<rect x="1673" y="737" width="160" height="90" fill="#222222"/>
<g clip-path="url(#tc00)"><rect x="1507" y="65" width="160" height="90" fill="url(#gSinem)"/><path d="M1658 65 H1667 V111 H1663 Z" fill="#b7a569" filter="url(#b1)"/><path d="M1507 65 L1525 65 L1507 79 Z" fill="#f7f3f0" filter="url(#b1)"/><ellipse cx="1653" cy="127" rx="18" ry="22" fill="#fbf7f4" filter="url(#b3)"/><g filter="url(#b2)"><path d="M1563 105 C1559 79 1569 65 1587 66 C1607 67 1615 85 1613 105 C1619 115 1615 131 1607 137 L1569 135 C1561 127 1563 115 1563 105 Z" fill="#38281f"/><ellipse cx="1583" cy="104" rx="18" ry="25" fill="#b4856b"/><ellipse cx="1581" cy="90" rx="13" ry="8" fill="#c99c82"/><ellipse cx="1579" cy="105" rx="7" ry="9" fill="#c4947a"/><path d="M1547 157 L1557 140 L1577 133 H1615 L1635 139 L1644 157 Z" fill="#2b3052"/><path d="M1573 127 H1599 L1603 136 L1569 136 Z" fill="#a67a62"/></g><g filter="url(#b1)"><ellipse cx="1575.5" cy="95" rx="4.4" ry="1.8" fill="#3c2a24"/><ellipse cx="1591" cy="96" rx="4.4" ry="1.8" fill="#3c2a24"/><path d="M1584 97 L1582 108 H1587" fill="none" stroke="#8e6450" stroke-width="1.6"/><ellipse cx="1584" cy="114.4" rx="7" ry="2" fill="#8c4f48"/></g><path d="M1606 95 V131" stroke="#c9a090" stroke-width="0.7" opacity="0.8"/><rect x="1643" y="145" width="24" height="10" fill="#8d8794" filter="url(#b1)"/><rect x="1507" y="136" width="112" height="19" fill="#1d1d1d" opacity="0.72"/><text class="ps" x="1511.5" y="149.9" textLength="97" lengthAdjust="spacingAndGlyphs">Sinem Sonsaat ...</text>
</g>
<g clip-path="url(#av11)"><rect x="1713" y="166" width="80" height="80" fill="url(#gHas)"/><g filter="url(#b2)"><ellipse cx="1786" cy="212" rx="11" ry="26" fill="#f4eadf"/><ellipse cx="1717" cy="206" rx="10" ry="30" fill="#2f8fe0"/><path d="M1726 210 C1723 176 1735 160 1759 162 C1773 160 1787 170 1781 188 C1780 196 1779 202 1777 210 Z" fill="#15163a"/><ellipse cx="1754" cy="216" rx="23" ry="33" fill="#bd8460"/><ellipse cx="1756" cy="192" rx="18" ry="8" fill="#dcae8c"/><ellipse cx="1765" cy="218" rx="9" ry="10" fill="#d9a27c"/><ellipse cx="1754" cy="236" rx="19" ry="9" fill="#5a3f34"/><rect x="1783" y="232" width="12" height="16" fill="#1c2450"/></g><g filter="url(#b1)"><ellipse cx="1742" cy="206" rx="8" ry="4.6" fill="#2a1c20"/><ellipse cx="1768" cy="206" rx="8" ry="4.6" fill="#2a1c20"/><path d="M1732 200 Q1742 194 1752 200 M1759 200 Q1769 194 1778 200" stroke="#17121c" stroke-width="3.2" fill="none"/><circle cx="1742" cy="206.6" r="1.6" fill="#c9c2c0"/><circle cx="1768" cy="206.6" r="1.6" fill="#c9c2c0"/><ellipse cx="1755" cy="224" rx="6" ry="2.6" fill="#5c3428"/><path d="M1740 229 Q1755 238 1772 228" stroke="#2c1618" stroke-width="2.6" fill="none"/></g></g>
<rect x="1673" y="232" width="112" height="19" fill="#1d1d1d" opacity="0.72"/><text class="ps" x="1695.6" y="245.9" textLength="85" lengthAdjust="spacingAndGlyphs">Hasan Tuğrul...</text>
<rect x="1679.9" y="233.8" width="6.6" height="11.6" rx="2.6" fill="#ee4856"/><path d="M1680.2 246.8 H1686.2" fill="none" stroke="#f08a92" stroke-width="1.2"/><path d="M1689.2 234.4 L1676.4 248" stroke="#222" stroke-width="2.6"/><path d="M1689.2 234.4 L1676.4 248" stroke="#e0626f" stroke-width="1.2"/>
<g clip-path="url(#av30)"><rect x="1547" y="358" width="80" height="80" fill="#15130f"/><g filter="url(#b1)"><rect x="1547" y="376" width="20" height="46" fill="#4e3a14"/><rect x="1547" y="396" width="20" height="4.5" fill="#d7951c"/><circle cx="1551" cy="386" r="3.2" fill="#f0b62a"/><rect x="1548" y="402" width="19" height="18" fill="#4e4a30"/><path d="M1562 359 L1581 360 L1575 367 L1563 366 Z" fill="none" stroke="#c8a23a" stroke-width="1.2"/><path d="M1585 368 L1599 358 H1627 V362 L1613 368 V416 H1603 V374 Z" fill="#a9ad98"/><rect x="1614" y="368" width="13" height="62" fill="#2c5c54"/><rect x="1617" y="370" width="8" height="52" fill="#6aa094" opacity="0.6"/></g><g filter="url(#b1)"><path d="M1552 440 L1557 422 L1573 411 H1599 L1613 420 L1619 440 Z" fill="#e6e4e2"/><path d="M1564 400 C1561 380 1571 369 1585 370 C1599 370 1605 382 1602 398 C1601 404 1597 402 1597 394 L1571 392 C1570 402 1566 406 1564 400 Z" fill="#33261e"/><ellipse cx="1583.5" cy="398" rx="13" ry="19" fill="#c8a18a"/><path d="M1569 388 C1573 376 1593 375 1598 388 C1591 380 1577 380 1569 388 Z" fill="#33261e"/><ellipse cx="1583" cy="413" rx="8" ry="5.4" fill="#8c6a56"/></g><g filter="url(#b05)"><ellipse cx="1576" cy="396" rx="7.2" ry="5" fill="#1a1210"/><ellipse cx="1592" cy="396" rx="7.2" ry="5" fill="#2e1c16"/><path d="M1582 394 H1586" stroke="#1a1210" stroke-width="1.2"/><path d="M1577 408.6 Q1583.5 405.4 1590 408.6" stroke="#5a3c2c" stroke-width="2.2" fill="none"/></g></g>
<rect x="1507" y="424" width="112" height="19" fill="#1d1d1d" opacity="0.72"/><text class="ps" x="1529.7" y="437.9" textLength="82.5" lengthAdjust="spacingAndGlyphs">Emre TURHA...</text>
<rect x="1513.9" y="425.8" width="6.6" height="11.6" rx="2.6" fill="#ee4856"/><path d="M1514.2 438.8 H1520.2" fill="none" stroke="#f08a92" stroke-width="1.2"/><path d="M1523.2 426.4 L1510.4 440" stroke="#222" stroke-width="2.6"/><path d="M1523.2 426.4 L1510.4 440" stroke="#e0626f" stroke-width="1.2"/>
<g clip-path="url(#av41)"><rect x="1713" y="454" width="80" height="80" fill="#707072"/><g filter="url(#b1)"><path d="M1713 454 H1725 L1737 504 L1719 510 L1713 494 Z" fill="#e4e6e6"/><path d="M1726 456 L1735 454 L1743 494 L1735 498 Z" fill="#34363a"/><path d="M1715 466 L1725 463 M1717 480 L1728 476 M1721 494 L1732 490" stroke="#8a8c90" stroke-width="1.6"/><rect x="1775" y="454" width="18" height="23" fill="#e6e8e8"/><rect x="1779" y="459" width="10" height="14" fill="#8c9090"/><path d="M1759 454 H1775 V478 L1793 476 V486 L1771 492 Z" fill="#2a2c30"/><path d="M1773 490 L1793 484 V500 H1775 Z" fill="#e8eaec"/><path d="M1717 512 L1735 500 L1741 508 L1721 520 Z" fill="#dfe6ea"/></g><g filter="url(#b1)"><path d="M1730 490 C1727 466 1737 455 1752 455.5 C1768 456 1774 468 1774 482 C1783 490 1782 502 1771 505 L1735 505 C1725 503 1726 496 1730 490 Z" fill="#2a1e1c"/></g><g filter="url(#b2)"><ellipse cx="1749.5" cy="488" rx="14.5" ry="20" fill="#c4927c"/><ellipse cx="1749" cy="471" rx="10" ry="5" fill="#cfa28c"/><path d="M1713 536 V512 L1735 506 L1751 514 L1769 502 L1793 496 V536 Z" fill="#f0281c"/><path d="M1743 506 L1751 514 L1761 506 Z" fill="#b8806c"/></g><g filter="url(#b05)"><rect x="1736.6" y="476.4" width="11" height="7.6" rx="2" fill="#7a5a50" fill-opacity="0.5" stroke="#241a1a" stroke-width="1.5"/><rect x="1750.6" y="476.4" width="11" height="7.6" rx="2" fill="#7a5a50" fill-opacity="0.5" stroke="#241a1a" stroke-width="1.5"/><path d="M1742 496.6 Q1749 501.4 1757.6 495.6" stroke="#8a3c38" stroke-width="2" fill="none"/></g></g>
<rect x="1673" y="520" width="112" height="19" fill="#1d1d1d" opacity="0.72"/><text class="ps" x="1695.2" y="533.9" textLength="82" lengthAdjust="spacingAndGlyphs">Yağmur Irma...</text>
<rect x="1679.9" y="521.8" width="6.6" height="11.6" rx="2.6" fill="#ee4856"/><path d="M1680.2 534.8 H1686.2" fill="none" stroke="#f08a92" stroke-width="1.2"/><path d="M1689.2 522.4 L1676.4 536" stroke="#222" stroke-width="2.6"/><path d="M1689.2 522.4 L1676.4 536" stroke="#e0626f" stroke-width="1.2"/>
<rect x="1503" y="637" width="168" height="98" fill="url(#gSpk)"/><g clip-path="url(#tc60)"><rect x="1507" y="641" width="160" height="90" fill="#c3ad88"/><g filter="url(#b1)"><path d="M1517 641 H1667 V645 L1635 653 L1565 658 Z" fill="#d9d6ce"/><path d="M1515 641 L1565 659 L1635 654 L1667 646" fill="none" stroke="#ece8e2" stroke-width="1.6"/><rect x="1635" y="653" width="32" height="78" fill="#bba688"/><rect x="1603" y="658" width="36" height="46" fill="#fbfbfa"/><rect x="1537.4" y="661" width="5" height="9.6" fill="#8c826a" stroke="#e6e0d0" stroke-width="0.8"/><rect x="1517" y="703" width="40" height="12" fill="#c9a6a2"/><rect x="1615" y="699" width="26" height="24" fill="#c2a4a2"/><rect x="1653" y="681" width="14" height="48" fill="#e4e0dc"/><rect x="1659" y="670" width="8" height="10" fill="#3a3430"/><rect x="1657" y="693" width="10" height="3" fill="#8e8a8a"/><rect x="1657" y="707" width="10" height="8" fill="#c8c2bc"/><rect x="1631" y="719" width="36" height="12" fill="#d9d7d4"/><ellipse cx="1653" cy="727" rx="12" ry="3.6" fill="#26262a"/></g><g filter="url(#b2)"><path d="M1549 733 L1557 707 L1577 697 H1599 L1617 705 L1627 733 Z" fill="#3c4672"/><ellipse cx="1587" cy="675" rx="17" ry="21" fill="#2a1c18"/><ellipse cx="1599" cy="681" rx="6" ry="16" fill="#241a18"/><ellipse cx="1584" cy="681" rx="11" ry="16" fill="#4a3026"/><ellipse cx="1599" cy="715" rx="8" ry="7" fill="#a8aec8"/><ellipse cx="1569" cy="713" rx="8" ry="6" fill="#232a50"/></g><ellipse cx="1583" cy="687.4" rx="5.4" ry="2" fill="#e8dcd4" filter="url(#b05)"/><rect x="1507" y="712" width="113" height="19" fill="#1d1d1d" opacity="0.72"/><text class="ps" x="1511.5" y="725.9" textLength="100.7" lengthAdjust="spacingAndGlyphs">Kitson Namatha...</text>
</g>
<g clip-path="url(#tc61)"><rect x="1673" y="641" width="160" height="90" fill="url(#gMel)"/><g filter="url(#b2)"><ellipse cx="1764" cy="673" rx="19" ry="18" fill="#3a2c28"/><ellipse cx="1761" cy="687" rx="17" ry="23" fill="#a8846e"/><ellipse cx="1757" cy="675" rx="12" ry="7" fill="#b89882"/><path d="M1717 733 L1725 711 L1745 704 L1761 711 L1777 704 L1797 711 L1807 733 Z" fill="#2d2d30"/></g><g filter="url(#b1)"><ellipse cx="1753" cy="685" rx="4.6" ry="1.8" fill="#5a4238"/><ellipse cx="1769" cy="686" rx="4.6" ry="1.8" fill="#5a4238"/><path d="M1759 687 L1757 698 H1763" fill="none" stroke="#7c5c4c" stroke-width="1.6"/><ellipse cx="1760" cy="704" rx="5" ry="1.5" fill="#7a4a44"/></g><rect x="1673" y="712" width="112" height="19" fill="#1d1d1d" opacity="0.72"/><text class="ps" x="1677.4" y="725.9" textLength="102.3" lengthAdjust="spacingAndGlyphs">Melike Unal Gez...</text>
</g>
<text class="pn" x="1703.3" y="115.2" textLength="99.3" lengthAdjust="spacingAndGlyphs">Ayşe Gül Özay</text>
<rect x="1679.9" y="137.8" width="6.6" height="11.6" rx="2.6" fill="#ee4856"/><path d="M1680.2 150.8 H1686.2" fill="none" stroke="#f08a92" stroke-width="1.2"/><path d="M1689.2 138.4 L1676.4 152" stroke="#222" stroke-width="2.6"/><path d="M1689.2 138.4 L1676.4 152" stroke="#e0626f" stroke-width="1.2"/>
<text class="pn" x="1531.8" y="211.2" textLength="110.5" lengthAdjust="spacingAndGlyphs">Oğulcan YAVUZ</text>
<rect x="1513.9" y="233.8" width="6.6" height="11.6" rx="2.6" fill="#ee4856"/><path d="M1514.2 246.8 H1520.2" fill="none" stroke="#f08a92" stroke-width="1.2"/><path d="M1523.2 234.4 L1510.4 248" stroke="#222" stroke-width="2.6"/><path d="M1523.2 234.4 L1510.4 248" stroke="#e0626f" stroke-width="1.2"/>
<text class="pn" x="1520.8" y="307.2" textLength="132.3" lengthAdjust="spacingAndGlyphs">Anıl  KORKMAZY...</text>
<rect x="1513.9" y="329.8" width="6.6" height="11.6" rx="2.6" fill="#ee4856"/><path d="M1514.2 342.8 H1520.2" fill="none" stroke="#f08a92" stroke-width="1.2"/><path d="M1523.2 330.4 L1510.4 344" stroke="#222" stroke-width="2.6"/><path d="M1523.2 330.4 L1510.4 344" stroke="#e0626f" stroke-width="1.2"/>
<text class="pn" x="1688.3" y="307.2" textLength="129.3" lengthAdjust="spacingAndGlyphs">Zeliha  Gürcan  D...</text>
<rect x="1679.9" y="329.8" width="6.6" height="11.6" rx="2.6" fill="#ee4856"/><path d="M1680.2 342.8 H1686.2" fill="none" stroke="#f08a92" stroke-width="1.2"/><path d="M1689.2 330.4 L1676.4 344" stroke="#222" stroke-width="2.6"/><path d="M1689.2 330.4 L1676.4 344" stroke="#e0626f" stroke-width="1.2"/>
<text class="pn" x="1690.9" y="403.2" textLength="124.2" lengthAdjust="spacingAndGlyphs">Eda BALAKBAB...</text>
<rect x="1679.9" y="425.8" width="6.6" height="11.6" rx="2.6" fill="#ee4856"/><path d="M1680.2 438.8 H1686.2" fill="none" stroke="#f08a92" stroke-width="1.2"/><path d="M1689.2 426.4 L1676.4 440" stroke="#222" stroke-width="2.6"/><path d="M1689.2 426.4 L1676.4 440" stroke="#e0626f" stroke-width="1.2"/>
<text class="pn" x="1521.1" y="499.2" textLength="131.8" lengthAdjust="spacingAndGlyphs">Hüseyin  Baran  Y...</text>
<rect x="1513.9" y="521.8" width="6.6" height="11.6" rx="2.6" fill="#ee4856"/><path d="M1514.2 534.8 H1520.2" fill="none" stroke="#f08a92" stroke-width="1.2"/><path d="M1523.2 522.4 L1510.4 536" stroke="#222" stroke-width="2.6"/><path d="M1523.2 522.4 L1510.4 536" stroke="#e0626f" stroke-width="1.2"/>
<text class="pn" x="1528.5" y="595.2" textLength="117.1" lengthAdjust="spacingAndGlyphs">Özgenaz Morova</text>
<rect x="1513.9" y="617.8" width="6.6" height="11.6" rx="2.6" fill="#ee4856"/><path d="M1514.2 630.8 H1520.2" fill="none" stroke="#f08a92" stroke-width="1.2"/><path d="M1523.2 618.4 L1510.4 632" stroke="#222" stroke-width="2.6"/><path d="M1523.2 618.4 L1510.4 632" stroke="#e0626f" stroke-width="1.2"/>
<text class="pn" x="1700.8" y="595.2" textLength="104.3" lengthAdjust="spacingAndGlyphs">Nupelda Tunca</text>
<rect x="1679.9" y="617.8" width="6.6" height="11.6" rx="2.6" fill="#ee4856"/><path d="M1680.2 630.8 H1686.2" fill="none" stroke="#f08a92" stroke-width="1.2"/><path d="M1689.2 618.4 L1676.4 632" stroke="#222" stroke-width="2.6"/><path d="M1689.2 618.4 L1676.4 632" stroke="#e0626f" stroke-width="1.2"/>
<text class="pn" x="1542.7" y="787.2" textLength="88.6" lengthAdjust="spacingAndGlyphs">Ayşenur Sarı</text>
<rect x="1513.9" y="809.8" width="6.6" height="11.6" rx="2.6" fill="#ee4856"/><path d="M1514.2 822.8 H1520.2" fill="none" stroke="#f08a92" stroke-width="1.2"/><path d="M1523.2 810.4 L1510.4 824" stroke="#222" stroke-width="2.6"/><path d="M1523.2 810.4 L1510.4 824" stroke="#e0626f" stroke-width="1.2"/>
<text class="pn" x="1697.0" y="787.2" textLength="112.1" lengthAdjust="spacingAndGlyphs">SERKAN TARIM</text>
<rect x="1679.9" y="809.8" width="6.6" height="11.6" rx="2.6" fill="#ee4856"/><path d="M1680.2 822.8 H1686.2" fill="none" stroke="#f08a92" stroke-width="1.2"/><path d="M1689.2 810.4 L1676.4 824" stroke="#222" stroke-width="2.6"/><path d="M1689.2 810.4 L1676.4 824" stroke="#e0626f" stroke-width="1.2"/>
<rect x="1633.6" y="833.8" width="73" height="32.6" rx="4" fill="#1b1b1b"/>
<path d="M1663.4 847.4 L1670 853.6 L1676.6 847.4" fill="none" stroke="#c8c8c8" stroke-width="1.7"/>
<path d="M1462.6 432 V460 M1465.4 432 V460" stroke="#d8d8d8" stroke-width="1"/>
<rect x="1869.6" y="0" width="1.4" height="951" fill="#3ba3a8"/><rect x="1871" y="0" width="3" height="951" fill="#b4dbe6"/>
</g>

</svg>
</body>
</html>
